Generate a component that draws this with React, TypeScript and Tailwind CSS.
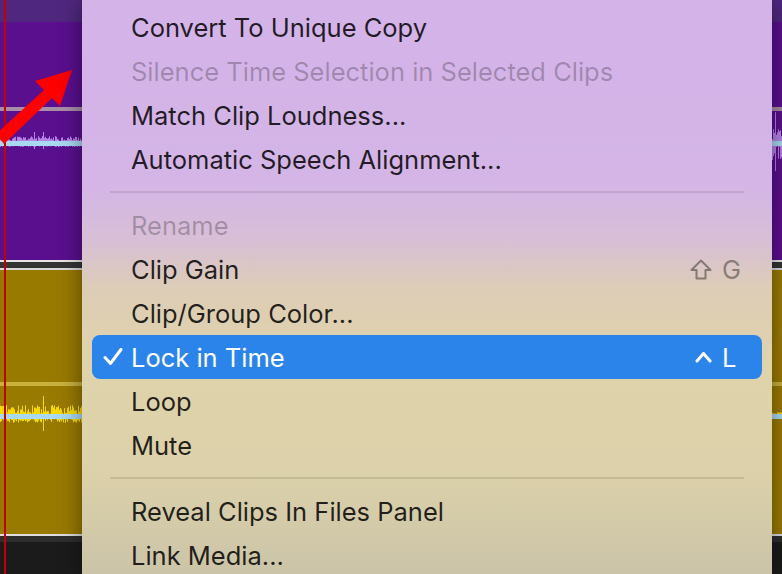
import React from "react";

function makeRand(seed: number) {
  let s = seed;
  return () => {
    s = (s * 9301 + 49297) % 233280;
    return s / 233280;
  };
}

function Wave({
  width,
  height,
  center,
  up,
  down,
  color,
  lineColor,
  seed,
  spikes,
}: {
  width: number;
  height: number;
  center: number;
  up: number;
  down: number;
  color: string;
  lineColor: string;
  seed: number;
  spikes: number[];
}) {
  const r = makeRand(seed);
  const bars: React.ReactElement[] = [];
  for (let x = 0; x < width; x++) {
    let a = 2 + r() * up;
    let b = 2 + r() * down;
    if (spikes.includes(x)) {
      a = up * 2.2;
      b = down * 3;
    }
    bars.push(
      <rect key={x} x={x} y={center - a} width={1} height={a + b} fill={color} />
    );
  }
  return (
    <svg width={width} height={height} className="block shrink-0">
      {bars}
      <rect x={0} y={center - 2} width={width} height={5} fill={lineColor} />
    </svg>
  );
}

function TrackColumn({
  width,
  seed,
  purpleUp,
  purpleDown,
  purpleSpikes,
  yellowUp,
  yellowDown,
  yellowSpikes,
  className,
}: {
  width: number;
  seed: number;
  purpleUp: number;
  purpleDown: number;
  purpleSpikes: number[];
  yellowUp: number;
  yellowDown: number;
  yellowSpikes: number[];
  className: string;
}) {
  return (
    <div className={className}>
      <div className="h-[22px] bg-[#50277f]" />
      <div className="h-[238px] bg-[#5a0f8e] flex flex-col">
        <div className="h-[85px]" />
        <div className="h-[4px] bg-[#a98ea8]" />
        <Wave
          width={width}
          height={60}
          center={32}
          up={purpleUp}
          down={purpleDown}
          color="#b483e4"
          lineColor="#a9d9f1"
          seed={seed}
          spikes={purpleSpikes}
        />
      </div>
      <div className="h-[2px] bg-[#e6e6e6]" />
      <div className="h-[6px] bg-[#343434]" />
      <div className="h-[2px] bg-[#d9d9d9]" />
      <div className="h-[264px] bg-[#997a00] flex flex-col">
        <div className="h-[112px]" />
        <div className="h-[4px] bg-[#c9b13c]" />
        <div className="h-[4px]" />
        <Wave
          width={width}
          height={50}
          center={26}
          up={yellowUp}
          down={yellowDown}
          color="#f6da00"
          lineColor="#a9d9f1"
          seed={seed + 7}
          spikes={yellowSpikes}
        />
      </div>
      <div className="h-[2px] bg-[#dedede]" />
      <div className="h-[6px] bg-[#2e2e2e]" />
      <div className="flex-1 bg-[#1b1b1b]" />
    </div>
  );
}

function Check() {
  return (
    <svg width="20" height="18" viewBox="0 0 20 18" className="block">
      <polyline
        points="2,9.5 7.5,15.5 18,1.5"
        fill="none"
        stroke="white"
        strokeWidth="3"
        strokeLinecap="round"
        strokeLinejoin="round"
      />
    </svg>
  );
}

function ShiftIcon() {
  return (
    <svg width="22" height="21" viewBox="0 0 22 21" className="block">
      <path
        d="M11 1.5 L20.5 11 L15.5 11 L15.5 19.5 L6.5 19.5 L6.5 11 L1.5 11 Z"
        fill="none"
        stroke="currentColor"
        strokeWidth="2"
        strokeLinejoin="round"
      />
    </svg>
  );
}

function CtrlIcon() {
  return (
    <svg width="17" height="12" viewBox="0 0 17 12" className="block">
      <polyline
        points="2,10 8.5,2.5 15,10"
        fill="none"
        stroke="white"
        strokeWidth="3"
        strokeLinecap="round"
        strokeLinejoin="round"
      />
    </svg>
  );
}

type ItemProps = {
  label: string;
  disabled?: boolean;
  selected?: boolean;
  shortcut?: { mod: "shift" | "ctrl"; key: string };
};

function Item({ label, disabled, selected, shortcut }: ItemProps) {
  const textColor = selected
    ? "text-white"
    : disabled
    ? "text-black/25"
    : "text-black/85";
  return (
    <div
      className={`h-[44px] flex items-center rounded-[8px] pl-[11px] ${
        selected ? "bg-[#2a84ea]" : ""
      } ${textColor}`}
    >
      <div className="w-[28px] shrink-0 flex items-center">{selected ? <Check /> : null}</div>
      <div className="flex-1 whitespace-nowrap pt-[2px]">{label}</div>
      {shortcut ? (
        <div className="flex items-center">
          <div
            className={`mr-[10px] flex items-center ${
              selected ? "text-white" : "text-black/40"
            }`}
          >
            {shortcut.mod === "shift" ? <ShiftIcon /> : <CtrlIcon />}
          </div>
          <div
            className={`w-[40px] text-left pt-[2px] ${
              selected ? "text-white" : "text-black/40"
            }`}
          >
            {shortcut.key}
          </div>
        </div>
      ) : null}
    </div>
  );
}

function Sep() {
  return (
    <div className="h-[22px] flex items-center px-[18px]">
      <div className="h-[2px] w-full bg-black/10" />
    </div>
  );
}

export default function App() {
  return (
    <div
      className="w-[782px] h-[574px] relative overflow-hidden flex bg-[#1b1b1b]"
      style={{ fontFamily: "Inter, 'Noto Sans', sans-serif" }}
    >
      <TrackColumn
        className="w-[82px] shrink-0 flex flex-col"
        width={82}
        seed={11}
        purpleUp={5}
        purpleDown={2}
        purpleSpikes={[34, 43]}
        yellowUp={9}
        yellowDown={5}
        yellowSpikes={[43]}
      />
      <div className="w-[690px] shrink-0 relative z-10 pt-[5px] px-[10px] text-[25.5px] leading-none bg-[linear-gradient(to_bottom,#d4b3e9_0px,#d4b5e6_185px,#d8bfd6_240px,#ddcdb6_290px,#dfd3ab_370px,#dcd1aa_470px,#cbc4a8_574px)] shadow-[0_0_22px_rgba(0,0,0,0.45)]">
        <Item label="Convert To Unique Copy" />
        <Item label="Silence Time Selection in Selected Clips" disabled />
        <Item label="Match Clip Loudness..." />
        <Item label="Automatic Speech Alignment..." />
        <Sep />
        <Item label="Rename" disabled />
        <Item label="Clip Gain" shortcut={{ mod: "shift", key: "G" }} />
        <Item label="Clip/Group Color..." />
        <Item label="Lock in Time" selected shortcut={{ mod: "ctrl", key: "L" }} />
        <Item label="Loop" />
        <Item label="Mute" />
        <Sep />
        <Item label="Reveal Clips In Files Panel" />
        <Item label="Link Media..." />
      </div>
      <TrackColumn
        className="w-[10px] shrink-0 flex flex-col"
        width={10}
        seed={23}
        purpleUp={14}
        purpleDown={16}
        purpleSpikes={[3]}
        yellowUp={2}
        yellowDown={1}
        yellowSpikes={[]}
      />
      <div className="absolute left-[4px] top-0 h-full w-[2px] bg-[#c50000]" />
      <svg
        className="absolute left-0 top-0"
        width="82"
        height="160"
        viewBox="0 0 82 160"
      >
        <polygon
          points="72,70 35,81 44,90 -4,134 4,144 52,98 60,106"
          fill="#ff0000"
        />
      </svg>
    </div>
  );
}
